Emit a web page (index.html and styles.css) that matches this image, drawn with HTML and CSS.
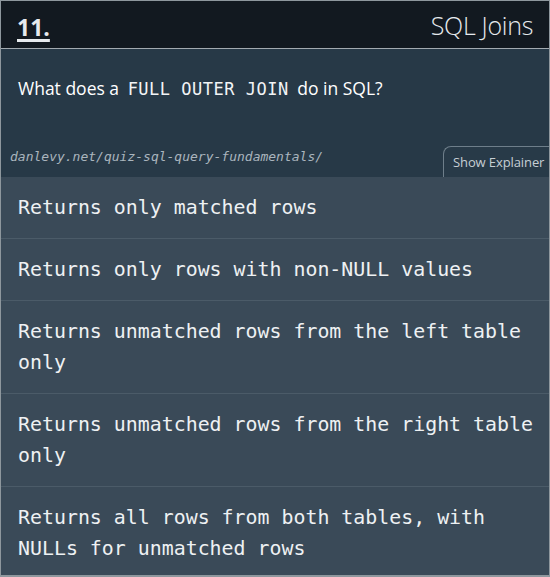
FILE: index.html
```html
<!DOCTYPE html>
<html>
<head>
<meta charset="utf-8">
<link rel="stylesheet" href="styles.css">
</head>
<body>
<div class="card">
  <header class="head">
    <span class="num">11.</span>
    <span class="topic">SQL Joins</span>
  </header>
  <section class="question">
    <p class="q">What does a <code>FULL OUTER JOIN</code> do in SQL?</p>
    <div class="meta">
      <span class="link">danlevy.net/quiz-sql-query-fundamentals/</span>
      <button class="explain">Show Explainer</button>
    </div>
  </section>
  <ul class="answers">
    <li>Returns only matched rows</li>
    <li>Returns only rows with non-NULL values</li>
    <li>Returns unmatched rows from the left table only</li>
    <li>Returns unmatched rows from the right table only</li>
    <li>Returns all rows from both tables, with NULLs for unmatched rows</li>
  </ul>
</div>
</body>
</html>
```
FILE: styles.css
```css
html, body {
  margin: 0;
  padding: 0;
  background: #8e979d;
}
.card {
  width: 548px;
  height: 574px;
  border: 1px solid #8e979d;
  border-bottom-width: 2px;
  overflow: hidden;
  background: #3a4a58;
  display: flex;
  flex-direction: column;
}
.head {
  flex-shrink: 0;
  background: #121920;
  height: 47px;
  border-bottom: 1px solid #a2aab0;
  display: flex;
  align-items: center;
  justify-content: space-between;
  padding: 0 16px 0 16px;
  font-family: "Open Sans", sans-serif;
  color: #e6eaed;
}
.num {
  font-size: 23px;
  font-weight: 700;
  text-decoration: underline;
  text-underline-offset: 3px;
  text-decoration-thickness: 3px;
  margin-top: 4px;
}
.topic {
  font-size: 25px;
  font-weight: 300;
  letter-spacing: -0.3px;
}
.question {
  flex-shrink: 0;
  background: #273947;
  height: 128px;
  display: flex;
  flex-direction: column;
  justify-content: space-between;
}
.q {
  margin: 0;
  padding: 27px 16px 0 17px;
  font-family: "Open Sans", sans-serif;
  font-size: 17.5px;
  color: #ffffff;
}
.q code {
  font-family: "DejaVu Sans Mono", monospace;
  font-size: 17px;
  letter-spacing: 0.5px;
  padding: 0 4px;
  color: #f2f4f6;
}
.meta {
  display: flex;
  align-items: flex-end;
  justify-content: space-between;
}
.link {
  font-family: "DejaVu Sans Mono", monospace;
  font-style: italic;
  font-size: 13px;
  color: #aab5be;
  padding: 0 0 13px 9px;
}
.explain {
  background: #283a48;
  border: 1px solid #6e7e8a;
  border-right: none;
  border-bottom: none;
  border-top-left-radius: 8px;
  height: 31px;
  width: 106px;
  padding: 0 0 0 9px;
  text-align: left;
  font-family: "Open Sans", sans-serif;
  font-size: 13px;
  color: #c6ced4;
  letter-spacing: -0.1px;
  white-space: nowrap;
}
.answers {
  list-style: none;
  margin: 0;
  padding: 0;
}
.answers li {
  font-family: "DejaVu Sans Mono", monospace;
  font-size: 19.9px;
  line-height: 31px;
  color: #eef1f3;
  padding: 15px 8px 15px 17px;
  border-bottom: 1px solid #4b5b68;
}
```
